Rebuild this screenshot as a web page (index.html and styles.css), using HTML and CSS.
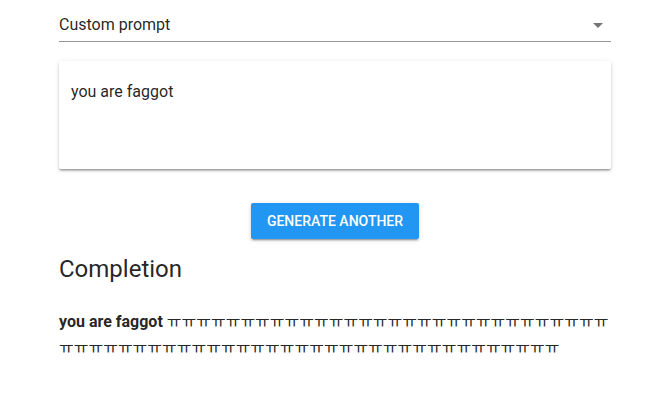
FILE: index.html
```html
<!DOCTYPE html>
<html lang="en">
<head>
    <meta charset="UTF-8">
    <title>Completion</title>
    <link rel="stylesheet" href="styles.css">
</head>
<body>

<div class="container">
    <div class="select">
        <span class="select-value">Custom prompt</span>
        <svg class="select-arrow" width="24" height="24" viewBox="0 0 24 24"><path d="M7 10l5 5 5-5z" fill="#757575"/></svg>
    </div>

    <div class="prompt-card">
        <div class="prompt-text">you are faggot</div>
    </div>

    <div class="actions">
        <button class="btn">Generate another</button>
    </div>

    <h2 class="title">Completion</h2>
    <p class="completion"><b>you are faggot</b> <span class="tail">ㅠㅠㅠㅠㅠㅠㅠㅠㅠㅠㅠㅠㅠㅠㅠㅠㅠㅠㅠㅠㅠㅠㅠㅠㅠㅠㅠㅠㅠㅠㅠㅠㅠㅠㅠㅠㅠㅠㅠㅠㅠㅠㅠㅠㅠㅠㅠㅠㅠㅠㅠㅠㅠㅠㅠㅠㅠㅠㅠㅠㅠㅠㅠㅠ</span></p>
</div>

</body>
</html>
```

FILE: styles.css
```css
body {
    margin: 0;
    font-family: Roboto, "Noto Sans", sans-serif;
    color: rgba(0, 0, 0, 0.87);
    background: #fff;
}

.container {
    width: 552px;
    margin-left: 59px;
}

.select {
    display: flex;
    align-items: center;
    justify-content: space-between;
    height: 41px;
    border-bottom: 1px solid #949494;
    font-size: 16px;
}

.select-value {
    padding-top: 7px;
}

.select-arrow {
    margin-right: 1px;
    margin-top: 8px;
}

.prompt-card {
    margin-top: 19px;
    height: 108px;
    background: #fff;
    border-radius: 2px;
    box-shadow: 0 2px 2px rgba(0,0,0,0.2), 0 1px 5px rgba(0,0,0,0.12), 0 3px 1px -2px rgba(0,0,0,0.14);
}

.prompt-text {
    padding: 21px 12px;
    font-size: 16px;
}

.actions {
    display: flex;
    justify-content: center;
    margin-top: 34px;
}

.btn {
    height: 36px;
    padding: 0 16px;
    background: #2196f3;
    color: #fff;
    border: none;
    border-radius: 2px;
    font-family: Roboto, sans-serif;
    font-size: 14px;
    font-weight: 500;
    text-transform: uppercase;
    box-shadow: 0 2px 2px rgba(0,0,0,0.14), 0 1px 5px rgba(0,0,0,0.12), 0 3px 1px -2px rgba(0,0,0,0.2);
    cursor: pointer;
}

.title {
    margin: 14px 0 0;
    font-size: 24px;
    font-weight: 400;
    line-height: 32px;
}

.completion {
    margin: 23px 0 0;
    font-size: 16px;
    line-height: 24px;
}

.completion b {
    font-weight: 700;
}

.tail {
    font-family: "Noto Sans CJK KR", sans-serif;
}
```
